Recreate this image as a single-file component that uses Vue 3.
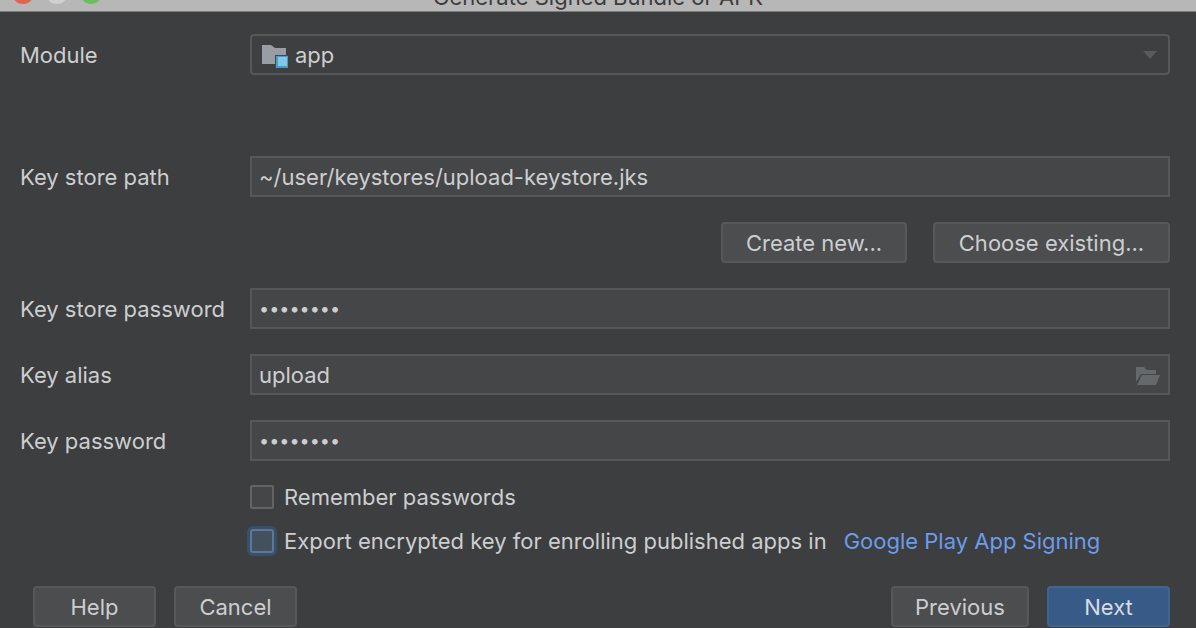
<script setup>
import { ref } from 'vue'

const moduleName = ref('app')
const storePath = ref('~/user/keystores/upload-keystore.jks')
const storePassword = ref('password')
const alias = ref('upload')
const keyPassword = ref('password')
const remember = ref(false)
const exportKey = ref(false)
</script>

<template>
  <main class="dialog">
    <header class="titlebar">
      <div class="lights">
        <span class="light close"></span>
        <span class="light minimize"></span>
        <span class="light zoom"></span>
      </div>
      <h1 class="title">Generate Signed Bundle or APK</h1>
    </header>

    <form class="body" @submit.prevent>
      <div class="row module-row">
        <label for="module">Module</label>
        <div class="control">
          <select id="module" v-model="moduleName" class="field combo">
            <option value="app">app</option>
          </select>
          <svg class="module-icon" viewBox="0 0 28 26" aria-hidden="true">
            <path d="M1 2h9l4 3h11v16H1z" fill="#9a9da3" />
            <path d="M14 12h13v13H14z" fill="#3c4a54" />
            <path d="M15 13h12v12H15z" fill="#4a9cc8" />
            <path d="M17 14h9v9h-9z" fill="#83c6e8" />
          </svg>
          <svg class="arrow" viewBox="0 0 14 8" aria-hidden="true">
            <path d="M0 0h14L7 8z" fill="#595b5d" />
          </svg>
        </div>
      </div>

      <div class="row">
        <label for="path">Key store path</label>
        <div class="control">
          <input id="path" v-model="storePath" class="field" type="text" />
        </div>
      </div>

      <div class="actions">
        <button class="button create" type="button">Create new...</button>
        <button class="button choose" type="button">Choose existing...</button>
      </div>

      <div class="row">
        <label for="store-password">Key store password</label>
        <div class="control">
          <input id="store-password" v-model="storePassword" class="field secret" type="password" />
        </div>
      </div>

      <div class="row">
        <label for="alias">Key alias</label>
        <div class="control">
          <input id="alias" v-model="alias" class="field" type="text" />
          <button class="browse" type="button" aria-label="Browse key aliases">
            <svg viewBox="0 0 26 20" aria-hidden="true">
              <path d="M1 1h8l3 3h9v4H6L1 16z" fill="#66696b" />
              <path d="M7 9h18l-4 10H2z" fill="#66696b" />
            </svg>
          </button>
        </div>
      </div>

      <div class="row">
        <label for="key-password">Key password</label>
        <div class="control">
          <input id="key-password" v-model="keyPassword" class="field secret" type="password" />
        </div>
      </div>

      <div class="checks">
        <div class="check">
          <input id="remember" v-model="remember" type="checkbox" />
          <label for="remember">Remember passwords</label>
        </div>
        <div class="check">
          <input id="export" v-model="exportKey" class="focused" type="checkbox" />
          <label for="export">Export encrypted key for enrolling published apps in</label>
          <a href="#">Google Play App Signing</a>
        </div>
      </div>

      <footer class="footer">
        <button class="button small" type="button">Help</button>
        <button class="button small" type="button">Cancel</button>
        <span class="spacer"></span>
        <button class="button previous" type="button">Previous</button>
        <button class="button small primary" type="submit">Next</button>
      </footer>
    </form>
  </main>
</template>

<style>
body {
  background: #3c3e40;
}
</style>

<style scoped>
.dialog,
.dialog * {
  box-sizing: border-box;
}

.dialog {
  color: #cdcecf;
  background: #3c3e40;
  font-family: Inter, "Liberation Sans", sans-serif;
  font-size: 22px;
  line-height: 28px;
}

.titlebar {
  position: relative;
  display: flex;
  align-items: flex-end;
  justify-content: center;
  height: 12px;
  overflow: hidden;
  background: #b7b7b8;
  border-bottom: 1px solid #7c7c7d;
}

.title {
  margin: 0;
  color: #3c3c3c;
  font-size: 22px;
  font-weight: 400;
  line-height: 28px;
}

.lights {
  position: absolute;
  bottom: 7px;
  left: 12px;
  display: flex;
  gap: 12px;
}

.light {
  width: 22px;
  height: 22px;
  border-radius: 50%;
}

.close {
  background: #e0654f;
}

.minimize {
  background: #d0d0d0;
}

.zoom {
  background: #6cbf5c;
}

.body {
  padding: 22px 26px 0 20px;
}

.row {
  display: grid;
  grid-template-columns: 230px 1fr;
  align-items: center;
  margin-bottom: 25px;
}

.module-row {
  margin-bottom: 81px;
}

.control {
  position: relative;
}

.field {
  display: block;
  width: 100%;
  height: 41px;
  margin: 0;
  padding: 0 7px;
  color: #cdcecf;
  background: #454648;
  border: 2px solid #555759;
  border-radius: 0;
  outline: none;
  font: inherit;
}

.secret {
  font-size: 18px;
}

.combo {
  appearance: none;
  padding-left: 43px;
  background: #3d3f41;
  border-radius: 4px;
}

.module-icon {
  position: absolute;
  top: 9px;
  left: 11px;
  width: 28px;
  height: 26px;
  pointer-events: none;
}

.arrow {
  position: absolute;
  top: 17px;
  right: 13px;
  width: 14px;
  height: 8px;
  pointer-events: none;
}

.browse {
  position: absolute;
  top: 12px;
  right: 9px;
  width: 26px;
  height: 20px;
  padding: 0;
  background: none;
  border: 0;
}

.browse svg {
  display: block;
  width: 26px;
  height: 20px;
}

.button {
  height: 41px;
  padding: 0;
  color: #cdcecf;
  background: #4b4d4f;
  border: 2px solid #56585a;
  border-radius: 4px;
  font: inherit;
}

.actions {
  display: flex;
  justify-content: flex-end;
  gap: 26px;
  margin-bottom: 25px;
}

.create {
  width: 186px;
}

.choose {
  width: 237px;
}

.checks {
  padding-left: 230px;
}

.check {
  display: flex;
  align-items: center;
  height: 44px;
}

.check:first-child {
  margin-top: -11px;
}

.check label {
  padding-left: 10px;
}

.check a {
  padding-left: 17px;
  color: #6c9cea;
  text-decoration: none;
}

.check input {
  appearance: none;
  width: 24px;
  height: 24px;
  margin: 0;
  background: #444648;
  border: 2px solid #626465;
  border-radius: 2px;
}

.check .focused {
  background: #43505e;
  border-color: #5c7797;
  border-radius: 3px;
  box-shadow: 0 0 0 3px #3a4f69;
}

.footer {
  display: flex;
  gap: 18px;
  margin-top: 23px;
  padding-left: 13px;
}

.spacer {
  flex: 1;
}

.small {
  width: 123px;
}

.previous {
  width: 138px;
}

.primary {
  color: #d5dce5;
  background: #385a86;
  border-color: #41648e;
}
</style>
